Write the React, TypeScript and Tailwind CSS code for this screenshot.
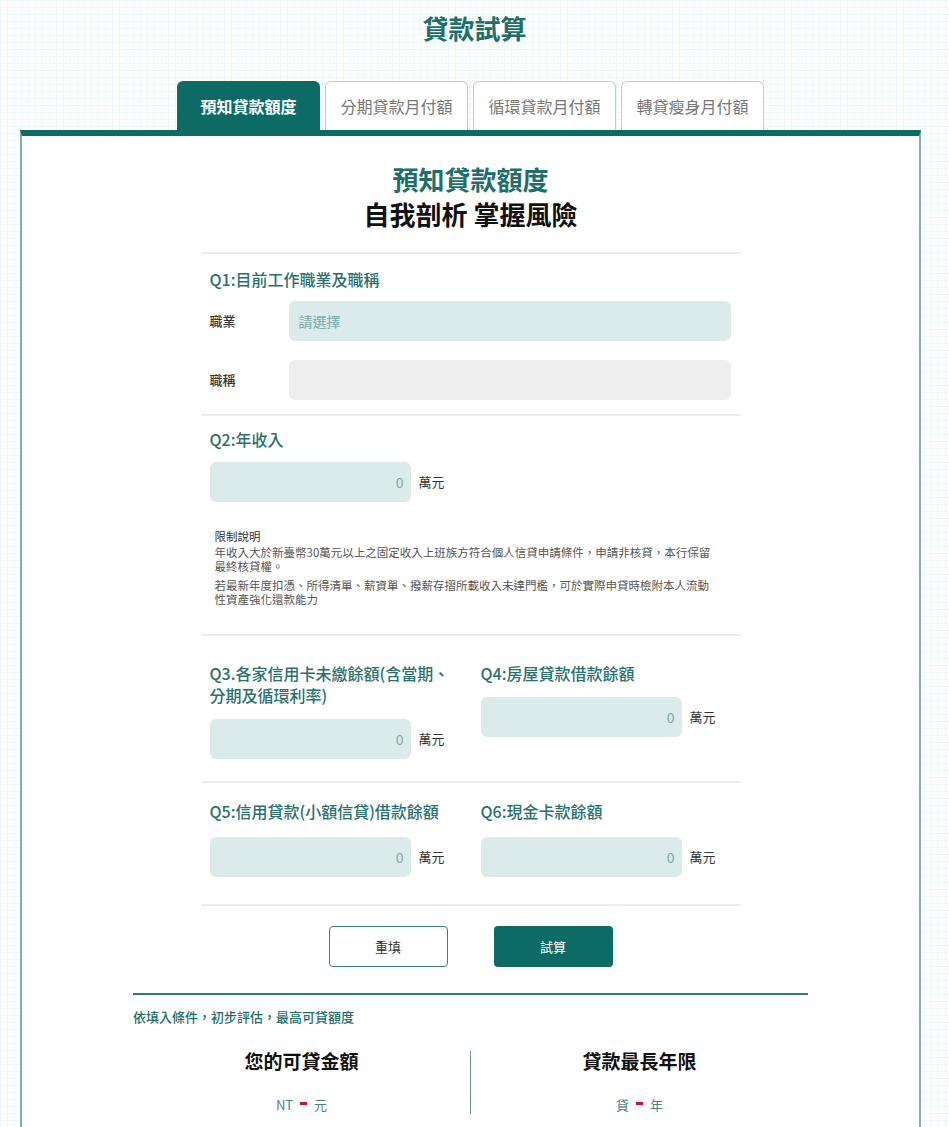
import React from "react";

const font = {
  fontFamily: '"Noto Sans CJK TC", "Noto Sans", sans-serif',
};

function NumInput() {
  return (
    <div className="flex items-center">
      <div className="flex h-[40px] w-[201px] items-center justify-end rounded-[6px] bg-[#dbeaea] pr-[7px] text-[14px] text-[#7fa9a7]">
        0
      </div>
      <span className="ml-[8px] text-[13px] text-[#333]">萬元</span>
    </div>
  );
}

function Hr() {
  return <div className="h-[2px] w-full bg-[#ececec]" />;
}

export default function App() {
  const tabs = ["預知貸款額度", "分期貸款月付額", "循環貸款月付額", "轉貸瘦身月付額"];
  return (
    <div
      style={font}
      className="min-h-[1127px] w-full bg-white bg-[linear-gradient(to_right,#edf6f8_1px,transparent_1px),linear-gradient(to_bottom,#edf6f8_1px,transparent_1px)] bg-[size:7px_7px]"
    >
      <h1 className="pt-[11px] text-center text-[26px] font-bold leading-[34px] text-[#1d6f6a]">
        貸款試算
      </h1>
      <div className="mx-[20px] mt-[36px] flex w-[901px] justify-center gap-[5px]">
        {tabs.map((t, i) =>
          i === 0 ? (
            <div
              key={t}
              className="flex h-[49px] w-[143px] items-center justify-center rounded-t-[6px] bg-[#0d6b65] text-[16px] font-bold text-white"
            >
              {t}
            </div>
          ) : (
            <div
              key={t}
              className="flex h-[49px] w-[143px] items-center justify-center rounded-t-[6px] border border-b-0 border-[#c9c9c9] bg-white text-[16px] text-[#777]"
            >
              {t}
            </div>
          )
        )}
      </div>
      <div className="mx-[20px] w-[901px] border-t-[6px] border-x-2 border-t-[#0d6b65] border-x-[#80b2af] bg-white">
        <div className="pt-[26px] text-center">
          <div className="text-[26px] font-bold leading-[34px] text-[#1d6f6a]">預知貸款額度</div>
          <div className="text-[26px] font-bold leading-[36px] text-[#111]">自我剖析 掌握風險</div>
        </div>
        <div className="mx-auto mt-[20px] w-[540px]">
          <Hr />
          {/* Q1 */}
          <div className="px-[9px] pt-[13px] pb-[14px]">
            <div className="text-[16px] font-medium leading-[24px] text-[#2a716d]">Q1:目前工作職業及職稱</div>
            <div className="mt-[10px] flex items-center">
              <span className="w-[79px] text-[13px] font-medium text-[#333]">職業</span>
              <div className="flex h-[40px] w-[442px] items-center rounded-[6px] bg-[#dbeaea] pl-[10px] text-[14px] text-[#73aaa7]">
                請選擇
              </div>
            </div>
            <div className="mt-[19px] flex items-center">
              <span className="w-[79px] text-[13px] font-medium text-[#333]">職稱</span>
              <div className="h-[40px] w-[442px] rounded-[6px] bg-[#eeeeee]" />
            </div>
          </div>
          <Hr />
          {/* Q2 */}
          <div className="px-[9px] pt-[11px] pb-[28px]">
            <div className="text-[16px] font-medium leading-[24px] text-[#2a716d]">Q2:年收入</div>
            <div className="mt-[11px]">
              <NumInput />
            </div>
            <div className="mt-[27px] pl-[5px] text-[11.5px] leading-[14px] text-[#555]">
              <div className="text-[#333]">限制說明</div>
              <div className="mt-[2px] whitespace-nowrap">
                年收入大於新臺幣30萬元以上之固定收入上班族方符合個人信貸申請條件，申請非核貸，本行保留
                <br />
                最終核貸權。
              </div>
              <div className="mt-[5px] whitespace-nowrap">
                若最新年度扣憑、所得清單、薪資單、撥薪存摺所載收入未達門檻，可於實際申貸時檢附本人流動
                <br />
                性資產強化還款能力
              </div>
            </div>
          </div>
          <Hr />
          {/* Q3 Q4 */}
          <div className="grid grid-cols-[271px_1fr] px-[9px] pt-[26px] pb-[22px]">
            <div>
              <div className="whitespace-nowrap text-[16px] font-medium leading-[22px] text-[#2a716d]">
                Q3.各家信用卡未繳餘額(含當期、
                <br />
                分期及循環利率)
              </div>
              <div className="mt-[13px]">
                <NumInput />
              </div>
            </div>
            <div>
              <div className="text-[16px] font-medium leading-[22px] text-[#2a716d]">Q4:房屋貸款借款餘額</div>
              <div className="mt-[13px]">
                <NumInput />
              </div>
            </div>
          </div>
          <Hr />
          {/* Q5 Q6 */}
          <div className="grid grid-cols-[271px_1fr] px-[9px] pt-[17px] pb-[27px]">
            <div>
              <div className="whitespace-nowrap text-[16px] font-medium leading-[22px] text-[#2a716d]">
                Q5:信用貸款(小額信貸)借款餘額
              </div>
              <div className="mt-[15px]">
                <NumInput />
              </div>
            </div>
            <div>
              <div className="text-[16px] font-medium leading-[22px] text-[#2a716d]">Q6:現金卡款餘額</div>
              <div className="mt-[15px]">
                <NumInput />
              </div>
            </div>
          </div>
          <Hr />
          <div className="flex justify-center gap-[46px] pt-[20px] pb-[26px]">
            <button className="h-[41px] w-[119px] rounded-[4px] border border-[#3d7f7b] bg-white text-[13px] text-[#333]">
              重填
            </button>
            <button className="h-[41px] w-[119px] rounded-[4px] bg-[#0d6b65] text-[13px] text-white">
              試算
            </button>
          </div>
        </div>
        <div className="mx-auto w-[675px]">
          <div className="h-[2px] w-full bg-[#2f7a75]" />
          <div className="mt-[12px] text-[13px] font-medium leading-[20px] text-[#1d6f6a]">
            依填入條件，初步評估，最高可貸額度
          </div>
          <div className="mt-[20px] grid grid-cols-[1fr_1px_1fr]">
            <div className="text-center">
              <div className="text-[19px] font-bold leading-[28px] text-[#111]">您的可貸金額</div>
              <div className="mt-[21px] flex items-center justify-center gap-[7px] text-[13px] leading-[18px] text-[#4d7f7c]">
                <span>NT</span>
                <span className="mb-[4px] h-[3px] w-[7px] bg-[#d0102b]" />
                <span>元</span>
              </div>
            </div>
            <div className="mt-[4px] h-[63px] bg-[#6c9a97]" />
            <div className="text-center">
              <div className="text-[19px] font-bold leading-[28px] text-[#111]">貸款最長年限</div>
              <div className="mt-[21px] flex items-center justify-center gap-[7px] text-[13px] leading-[18px] text-[#4d7f7c]">
                <span>貸</span>
                <span className="mb-[4px] h-[3px] w-[7px] bg-[#d0102b]" />
                <span>年</span>
              </div>
            </div>
          </div>
          <div className="h-[40px]" />
        </div>
      </div>
    </div>
  );
}
